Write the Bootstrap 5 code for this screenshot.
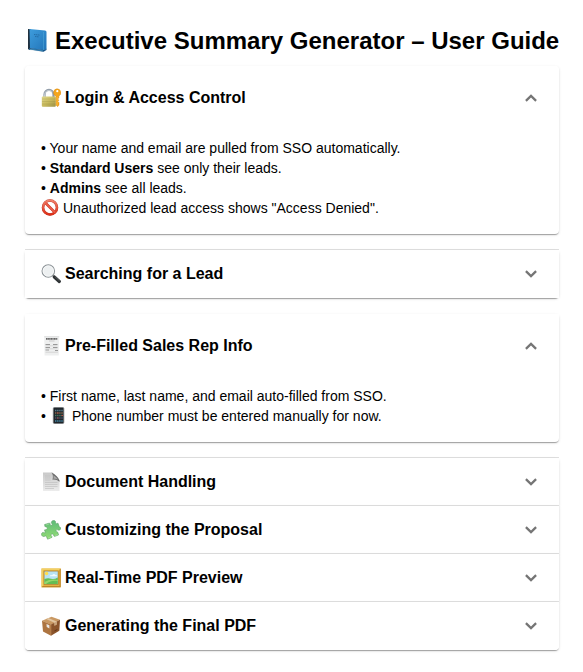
<!DOCTYPE html>
<html lang="en">
<head>
<meta charset="utf-8">
<meta name="viewport" content="width=device-width, initial-scale=1">
<title>Executive Summary Generator – User Guide</title>
<link href="https://cdn.jsdelivr.net/npm/bootstrap@5.3.0/dist/css/bootstrap.min.css" rel="stylesheet">
<style>
body { font-family: "Liberation Sans", Arial, sans-serif; color: #000; background: #fff; }
.guide-page { padding: 24px 24px 20px 25px; }
.guide-title { font-size: 24px; line-height: 34px; font-weight: 700; gap: 6px; }
.guide {
  --bs-accordion-border-width: 0;
  --bs-accordion-border-radius: 4px;
  --bs-accordion-inner-border-radius: 4px;
  --bs-accordion-btn-color: #000;
  --bs-accordion-active-color: #000;
  --bs-accordion-active-bg: #fff;
}
.guide .accordion-item {
  color: #000;
  box-shadow: 0 2px 1px -1px rgba(0,0,0,.2), 0 1px 1px 0 rgba(0,0,0,.14), 0 1px 3px 0 rgba(0,0,0,.12);
}
.guide .accordion-item.closed { position: relative; }
.guide .accordion-item.closed::before {
  content: ""; position: absolute; top: -1px; left: 0; right: 0; height: 1px; background: rgba(0,0,0,.12);
}
.guide .spaced { margin-bottom: 16px; border-radius: 4px; }
.guide .group-start { border-radius: 4px 4px 0 0; }
.guide .accordion-button {
  font-size: 16px; line-height: 24px; font-weight: 700; min-height: 48px; padding: 0 16px; gap: 4px; box-shadow: none;
}
.guide .accordion-button:not(.collapsed) { min-height: 64px; }
.guide .accordion-button::after { display: none; }
.guide .accordion-body { font-size: 14px; line-height: 20px; padding: 8px 16px 16px; }
.glyph { width: 20px; height: 20px; flex: none; }
.glyph-title { width: 24px; height: 24px; flex: none; }
.glyph-text { width: 18px; height: 18px; flex: none; }
.chevron { width: 24px; height: 24px; fill: #757575; }
.accordion-button:not(.collapsed) .chevron { transform: rotate(180deg); }
</style>
</head>
<body>
<svg width="0" height="0" class="position-absolute" aria-hidden="true">
  <defs>
    <linearGradient id="blue" x1="0" y1="0" x2="1" y2="1"><stop offset="0" stop-color="#3e9ddd"/><stop offset="1" stop-color="#2274b8"/></linearGradient>
    <linearGradient id="brass" x1="0" y1="0" x2="1" y2="1"><stop offset="0" stop-color="#e0d88b"/><stop offset=".5" stop-color="#c9bb5e"/><stop offset="1" stop-color="#9c9145"/></linearGradient>
    <linearGradient id="red" x1="0" y1="0" x2="0" y2="1"><stop offset="0" stop-color="#f0806b"/><stop offset="1" stop-color="#dd3019"/></linearGradient>
    <linearGradient id="green" x1="0" y1="0" x2="0" y2="1"><stop offset="0" stop-color="#5dbb78"/><stop offset="1" stop-color="#93dc74"/></linearGradient>
    <linearGradient id="paper" x1="0" y1="0" x2="0" y2="1"><stop offset="0" stop-color="#c9c9c9"/><stop offset="1" stop-color="#ececec"/></linearGradient>
    <symbol id="chev" viewBox="0 0 24 24"><path d="M16.300 8.300 12 12.600 7.700 8.300 6.100 9.900l5.900 5.900 5.900-5.900z"/></symbol>
  </defs>
</svg>
<main class="container-fluid guide-page">
  <h1 class="guide-title d-flex align-items-center mb-2 text-nowrap">
    <svg class="glyph-title" viewBox="0 0 24 24" aria-hidden="true">
      <path d="M4 18.500 18.500 20.200 20 19.500V22L18 23 4 21z" fill="#e4e8ea"/>
      <path d="M3 0 6 .2V19.500L4.500 21 3 20z" fill="#20303e"/>
      <path d="M4.500 0 20 1.500Q21.500 1.700 21.500 3V20L18.500 21.200 5 19.300z" fill="url(#blue)"/>
      <path d="M3.500 20.300 18.500 22.700 21.500 21V19.800L18.500 21 5 19z" fill="#17578c"/>
      <path d="M18.500 3V21M4.500 20 18 21.800" stroke="#55acd9" stroke-width=".5" fill="none"/>
      <path d="M9 5.500 15 6.100M10 7.500 14 7.900" stroke="#226ba4" stroke-width=".9" stroke-dasharray="1.400 .5"/>
    </svg>
    <span>Executive Summary Generator – User Guide</span>
  </h1>

  <div class="accordion guide" id="guide">
    <section class="accordion-item spaced">
      <h2 class="accordion-header"><button class="accordion-button" type="button" data-bs-toggle="collapse" data-bs-target="#s1" aria-expanded="true" aria-controls="s1">
        <svg class="glyph" viewBox="0 0 20 20" aria-hidden="true">
          <path d="M3.500 10V6.500a4.500 4.700 0 0 1 9 0V10" fill="none" stroke="#8d99a6" stroke-width="2.200"/>
          <path d="M3.500 9V6.500a4.500 4.700 0 0 1 8-2.500" fill="none" stroke="#d2d8de" stroke-width=".8"/>
          <rect x=".8" y="8.500" width="14" height="10.300" rx="1" fill="url(#brass)"/>
          <path d="M1 11H14.500M1 13.500H14.500M1 16H14.500" stroke="#8e8440" stroke-width=".4" opacity=".6"/>
          <path d="M16 .8a3.900 3.900 0 0 1 1.900 7.300V10L16.800 11 18 12.200 16.900 13.400 18 14.600V17L16.600 18.700 15 17V8.300A3.900 3.900 0 0 1 16 .8z" fill="#f4a51c" stroke="#d98712" stroke-width=".4"/>
          <circle cx="16.300" cy="3.200" r="1.100" fill="#fff"/>
          <path d="M16 9V17" stroke="#ffd057" stroke-width=".6"/>
        </svg>
        <span>Login &amp; Access Control</span><svg class="chevron ms-auto" aria-hidden="true"><use href="#chev"/></svg>
      </button></h2>
      <div id="s1" class="accordion-collapse collapse show"><div class="accordion-body">
        <div>• Your name and email are pulled from SSO automatically.</div>
        <div>• <strong>Standard Users</strong> see only their leads.</div>
        <div>• <strong>Admins</strong> see all leads.</div>
        <div class="d-flex align-items-center gap-1">
          <svg class="glyph-text" viewBox="0 0 18 18" aria-hidden="true">
            <circle cx="9" cy="8.500" r="7" fill="#fff" stroke="#b52b1b" stroke-width="2.600"/>
            <path d="M4 3.500 14 13.500" stroke="#cf3320" stroke-width="2.500"/>
            <circle cx="9" cy="8.500" r="7" fill="none" stroke="url(#red)" stroke-width="2"/>
            <path d="M4 3.500 14 13.500" stroke="#e9604b" stroke-width="1.700"/>
          </svg>
          <span>Unauthorized lead access shows "Access Denied".</span>
        </div>
      </div></div>
    </section>

    <section class="accordion-item spaced closed">
      <h2 class="accordion-header"><button class="accordion-button collapsed" type="button" aria-expanded="false">
        <svg class="glyph" viewBox="0 0 20 20" aria-hidden="true">
          <path d="M12 11.500 14 13.500" stroke="#777" stroke-width="1.800"/>
          <path d="M13.300 13 18.300 17.500" stroke="#2e3234" stroke-width="3.200" stroke-linecap="round"/>
          <path d="M14 12.700 18.500 16.700" stroke="#777d80" stroke-width=".6"/>
          <circle cx="7.300" cy="7" r="6.200" fill="#edf0f1" stroke="#8d9498" stroke-width="1.200"/>
          <circle cx="7.300" cy="7" r="5.300" fill="none" stroke="#fff" stroke-width=".7"/>
        </svg>
        <span>Searching for a Lead</span><svg class="chevron ms-auto" aria-hidden="true"><use href="#chev"/></svg>
      </button></h2>
    </section>

    <section class="accordion-item spaced">
      <h2 class="accordion-header"><button class="accordion-button" type="button" data-bs-toggle="collapse" data-bs-target="#s3" aria-expanded="true" aria-controls="s3">
        <svg class="glyph" viewBox="0 0 20 20" aria-hidden="true">
          <path d="M3.200.3H18.200L17.800 19.500H3.600z" fill="#eeefef"/>
          <path d="M3.200.3H18.200V1.200H3.200z" fill="#dcdcdc"/>
          <path d="M5 2.800H16.500" stroke="#666" stroke-width="1.700" stroke-dasharray="1.300 .3"/>
          <path d="M8 5H13.500" stroke="#bbb" stroke-width=".7"/>
          <path d="M4.500 8.500H9M12 8.500H16.500M4.500 11.500H9M12 11.500H16.500M4.500 14H8M14 14.500H17" stroke="#999" stroke-width="1"/>
          <path d="M4.500 9.800H16.500M4.500 12.800H16.500M4.500 16.200H17" stroke="#c4c4c4" stroke-width=".6"/>
        </svg>
        <span>Pre-Filled Sales Rep Info</span><svg class="chevron ms-auto" aria-hidden="true"><use href="#chev"/></svg>
      </button></h2>
      <div id="s3" class="accordion-collapse collapse show"><div class="accordion-body">
        <div>• First name, last name, and email auto-filled from SSO.</div>
        <div class="d-flex align-items-center gap-1">
          <span>•</span>
          <svg class="glyph-text" viewBox="0 0 18 18" aria-hidden="true">
            <rect x="3.300" y=".5" width="10.500" height="16" rx="1.200" fill="#20262b" stroke="#727679" stroke-width=".8"/>
            <path d="M5 3.500H13" stroke="#567c8c" stroke-width="1.400" stroke-dasharray="1.400 .7"/>
            <path d="M5 6H13" stroke="#8b6b50" stroke-width="1.400" stroke-dasharray="1.400 .7"/>
            <path d="M5 8.500H13" stroke="#477d67" stroke-width="1.400" stroke-dasharray="1.400 .7"/>
            <path d="M5 11H13" stroke="#4a5268" stroke-width="1.400" stroke-dasharray="1.400 .7"/>
            <path d="M5 14H13" stroke="#4287a4" stroke-width="1.400" stroke-dasharray="1.400 .7"/>
            <path d="M7.200 6H8.500M11.500 8.500H13M7.200 11H8.500" stroke="#bc493f" stroke-width="1.200"/>
          </svg>
          <span>Phone number must be entered manually for now.</span>
        </div>
      </div></div>
    </section>

    <section class="accordion-item closed group-start">
      <h2 class="accordion-header"><button class="accordion-button collapsed" type="button" aria-expanded="false">
        <svg class="glyph" viewBox="0 0 20 20" aria-hidden="true">
          <path d="M2 .5H11.500L18.500 8V19H2z" fill="url(#paper)"/>
          <path d="M10.500 .5Q12.700 3 11.500 7.700 15.700 7.200 18.500 9.800V8.500Q17 4 10.500 .5z" fill="#6e6e6e"/>
          <path d="M12.200 3.200Q12.900 5 12.400 6.800 15 6.500 17 7.500 15.500 5 12.200 3.200z" fill="#a8a8a8"/>
          <path d="M4 4H9.500M4 6H9.500M4 8H9.500M4 10.500H16.500M4 12.500H16.500M4 14.500H16.500M4 16.500H13" stroke="#bcbcbc" stroke-width=".6"/>
        </svg>
        <span>Document Handling</span><svg class="chevron ms-auto" aria-hidden="true"><use href="#chev"/></svg>
      </button></h2>
    </section>

    <section class="accordion-item closed">
      <h2 class="accordion-header"><button class="accordion-button collapsed" type="button" aria-expanded="false">
        <svg class="glyph" viewBox="0 0 20 20" aria-hidden="true">
          <path d="M3.600 4.500 8 3.200C9.300 2.900 9.200 4 9.300 4.800 9.700 6 11.600 5.500 11.200 4.200 10.700 3.200 9.800 2.600 10.600 1.600 11.500.2 13.800-.1 14.500 1.500 14.800 2.500 14.200 3.500 15.200 3.700L17 3.200 18.200 6.600C18.500 7.500 19.600 7 19.700 8.200 19.900 9.800 17.800 10.700 16.700 9.800 15.700 9.200 14.600 10.200 15.300 11.200 15.900 12 17 11.900 17 12.900L17.500 15 13.900 16.300C12.400 16.500 12.900 15.300 12.400 14.500 11.500 13.400 9.700 14.100 10.100 15.400 10.400 16.200 11.300 16.500 10.900 17.400L6.600 19.200 5.300 16.300C4.700 15.400 4 16.400 2.800 16.500.5 16.600-.3 13.700 1.500 12.600 2.700 12 3.500 13.200 4.400 12.600L3.500 9.900C4.800 9.700 6.300 9.700 6.300 8.200 6.200 6.800 4.500 6.700 3.900 6.500z" fill="url(#green)" stroke="#5c9f66" stroke-width=".6" stroke-linejoin="round"/>
          <path d="M5 4.900 8.300 4M7 18.200 10 17M14 15.500 16.700 14.500" fill="none" stroke="#bdeeae" stroke-width=".5"/>
        </svg>
        <span>Customizing the Proposal</span><svg class="chevron ms-auto" aria-hidden="true"><use href="#chev"/></svg>
      </button></h2>
    </section>

    <section class="accordion-item closed">
      <h2 class="accordion-header"><button class="accordion-button collapsed" type="button" aria-expanded="false">
        <svg class="glyph" viewBox="0 0 20 20" aria-hidden="true">
          <path d="M.5.500H19.700V19.300H.5z" fill="#e5b341"/>
          <path d="M.5.500H19.700L18 2.200H2.300V17.500L.5 19.300z" fill="#f2cf62"/>
          <path d="M.5 19.300H19.700V.500L18.500 1.700V18H1.800z" fill="#bc8527"/>
          <rect x="2.700" y="2.700" width="14.800" height="14" fill="#a97722"/>
          <rect x="3.400" y="3.400" width="13.400" height="12.700" fill="#b8e2f3"/>
          <path d="M3.400 11Q7 9.500 10 10.700T16.800 9.500V16.100H3.400z" fill="#63bd52"/>
          <path d="M3.400 14Q10 10.500 16.800 12V13Q10 12 5 16.100H3.400z" fill="#95d86c"/>
          <circle cx="5.600" cy="5.500" r="1.700" fill="#ffdf4d"/>
          <path d="M8.500 8.300Q9.500 6.500 11 7.200 13 4.700 14.500 7 16 6.800 16.500 8.300z" fill="#f0fafc"/>
        </svg>
        <span>Real-Time PDF Preview</span><svg class="chevron ms-auto" aria-hidden="true"><use href="#chev"/></svg>
      </button></h2>
    </section>

    <section class="accordion-item closed">
      <h2 class="accordion-header"><button class="accordion-button collapsed" type="button" aria-expanded="false">
        <svg class="glyph" viewBox="0 0 20 20" aria-hidden="true">
          <path d="M1 4.800 10.500.700 19 3.800 10 8.700z" fill="#c99862"/>
          <path d="M1 4.800 10 8.500V19.700L2 15.500z" fill="#ad7440"/>
          <path d="M10 8.500 19 3.800 18.300 14.800 10 19.700z" fill="#8b542b"/>
          <path d="M5 3.100 7.200 2.100 15.700 5.500V8.500L13.500 9.700V6.700z" fill="#e1c5a0"/>
          <path d="M13.500 6.700 15.700 5.500V8.500L13.500 9.700z" fill="#c9a47b"/>
          <path d="M5.500 8 8.400 9.200V12.400L5.700 11.100z" fill="#e8e6e4"/>
          <path d="M13.500 15.500 16.300 14V13L13.500 14.500z" fill="#5f3518"/>
          <path d="M10 8.700V19.500" stroke="#d0a06b" stroke-width=".4"/>
        </svg>
        <span>Generating the Final PDF</span><svg class="chevron ms-auto" aria-hidden="true"><use href="#chev"/></svg>
      </button></h2>
    </section>
  </div>
</main>
<script src="https://cdn.jsdelivr.net/npm/bootstrap@5.3.0/dist/js/bootstrap.bundle.min.js"></script>
</body>
</html>
